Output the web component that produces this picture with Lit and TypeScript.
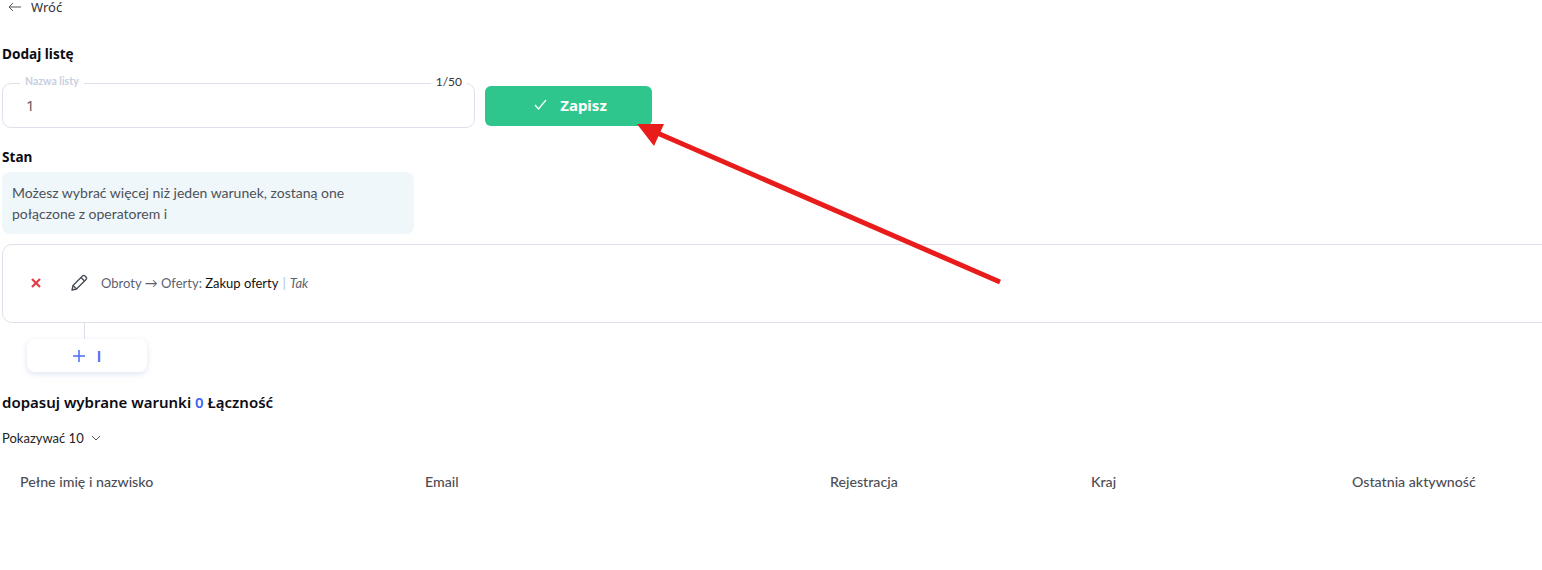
import { LitElement, html, css } from "lit";
import { customElement } from "lit/decorators.js";

@customElement("app-root")
export class AppRoot extends LitElement {
  static styles = css`
    :host { display: block; position: relative; width: 1542px; height: 570px; overflow: hidden; background: #fff; font-family: Lato, sans-serif; color: #111; }
    .page { padding: 0 0 0 2px; display: flex; flex-direction: column; align-items: flex-start; }
    .back { height: 14px; line-height: 14px; display: flex; align-items: center; gap: 10px; padding-left: 6px; font-size: 13px; color: #333; font-family: "Noto Sans", sans-serif; }
    .back svg { display: block; }
    h2 { margin: 0; font-family: "Noto Sans", sans-serif; font-weight: 700; font-size: 13.6px; line-height: 18px; color: #0c0c14; }
    .h-add { margin-top: 31px; }
    .form { margin-top: 20px; display: flex; align-items: center; gap: 10px; }
    .field { position: relative; box-sizing: border-box; width: 473px; height: 45px; border: 1px solid #e0e0ec; border-radius: 9px; display: flex; align-items: center; padding: 0 0 2px 23px; font-size: 15px; color: #6b5b5b; font-family: "Noto Sans", sans-serif; }
    .legend { position: absolute; left: 17px; top: -9px; padding: 0 5px; background: #fff; font-size: 10.5px; line-height: 12px; font-weight: 700; color: #c9cede; font-family: Lato, sans-serif; }
    .count { position: absolute; right: 7px; top: -9px; padding: 0 5px; background: #fff; font-size: 12px; line-height: 14px; color: #333; font-family: Lato, sans-serif; }
    .save { box-sizing: border-box; width: 167px; height: 40px; border: 0; border-radius: 6px; padding: 0 0 2px 4px; background: #2fc68d; color: #fff; display: flex; align-items: center; justify-content: center; gap: 13px; font: 700 15px "Noto Sans", sans-serif; }
    .h-stan { margin-top: 20px; }
    .info { box-sizing: border-box; margin-top: 6px; width: 412px; height: 62px; padding: 10px; border-radius: 8px; background: #eff7fb; font-size: 14px; line-height: 21px; color: #4d5159; }
    .card { box-sizing: border-box; margin-top: 10px; width: 1552px; height: 79px; border: 1px solid #e0e0ec; border-radius: 10px; display: flex; align-items: center; padding: 0 0 2px 27px; font-size: 13px; color: #5b6270; }
    .card .x { display: block; margin-right: 28px; }
    .card .pen { display: block; margin-right: 13px; }
    .card b { font-weight: 400; color: #111; }
    .card .sep { color: #a9c3e0; margin: 0 4px; }
    .card i { color: #5b6270; }
    .line { width: 1px; height: 16px; margin-left: 82px; background: #e0e0ec; }
    .add { box-sizing: border-box; margin-left: 25px; width: 120px; height: 33px; border: 0; border-radius: 8px; background: #fff; box-shadow: 0 2px 6px rgba(110,130,190,.22); display: flex; align-items: center; justify-content: center; gap: 12px; color: #4d6ef5; font: 700 15px Lato, sans-serif; }
    .match { margin-top: 20px; font-family: "Noto Sans", sans-serif; font-size: 15px; line-height: 20px; font-weight: 600; color: #0c0c14; }
    .match span { color: #3f63f3; }
    .show { margin-top: 17px; display: flex; align-items: center; gap: 7px; font-size: 13px; line-height: 18px; color: #222; }
    .table { margin: 26px 0 0 18px; display: grid; grid-template-columns: 405px 405px 261px 261px 190px; font-size: 14.2px; line-height: 18px; font-weight: 500; color: #4d4d55; }
    .arrow { position: absolute; left: 0; top: 0; pointer-events: none; }
  `;

  render() {
    return html`
      <div class="page">
        <div class="back">
          <svg width="13" height="10" viewBox="0 0 13 10" fill="none" stroke="#555" stroke-width="1"><path d="M13 5H1M5 1 1 5l4 4"/></svg>
          <span>Wróć</span>
        </div>
        <h2 class="h-add">Dodaj listę</h2>
        <div class="form">
          <div class="field">
            <span class="legend">Nazwa listy</span>
            <span class="count">1/50</span>
            1
          </div>
          <button class="save">
            <svg width="13" height="11" viewBox="0 0 13 11" fill="none" stroke="#fff" stroke-width="1.3"><path d="M1 6l3.5 4L12 1"/></svg>
            Zapisz
          </button>
        </div>
        <h2 class="h-stan">Stan</h2>
        <div class="info">Możesz wybrać więcej niż jeden warunek, zostaną one połączone z operatorem i</div>
        <div class="card">
          <svg class="x" width="12" height="12" viewBox="0 0 12 12" fill="none" stroke="#e23b44" stroke-width="2.2"><path d="M2 2l8 8M10 2l-8 8"/></svg>
          <svg class="pen" width="18" height="18" viewBox="0 0 18 18" fill="none" stroke="#444a54" stroke-width="1.3" stroke-linejoin="round"><path d="M2 16l1-4.5L12.5 2a1.8 1.8 0 0 1 2.5 0l1 1a1.8 1.8 0 0 1 0 2.5L6.500 15z"/><path d="M11 3.500l3.500 3.500M3 11.500 6.500 15"/></svg>
          <span>Obroty → Oferty: <b>Zakup oferty</b><span class="sep">|</span><i>Tak</i></span>
        </div>
        <div class="line"></div>
        <button class="add">
          <svg width="12" height="12" viewBox="0 0 12 12" fill="none" stroke="#4d6ef5" stroke-width="1.5"><path d="M6 0v12M0 6h12"/></svg>
          <span>I</span>
        </button>
        <div class="match">dopasuj wybrane warunki <span>0</span> Łączność</div>
        <div class="show">
          Pokazywać 10
          <svg width="10" height="6" viewBox="0 0 10 6" fill="none" stroke="#555" stroke-width="1"><path d="M1 1l4 4 4-4"/></svg>
        </div>
        <div class="table">
          <div>Pełne imię i nazwisko</div>
          <div>Email</div>
          <div>Rejestracja</div>
          <div>Kraj</div>
          <div>Ostatnia aktywność</div>
        </div>
      </div>
      <svg class="arrow" width="1542" height="570" viewBox="0 0 1542 570">
        <path d="M1000 282 655 132" stroke="#e91c1c" stroke-width="5" fill="none"/>
        <path d="M637 124 664 124 654 146z" fill="#e91c1c"/>
      </svg>
    `;
  }
}
